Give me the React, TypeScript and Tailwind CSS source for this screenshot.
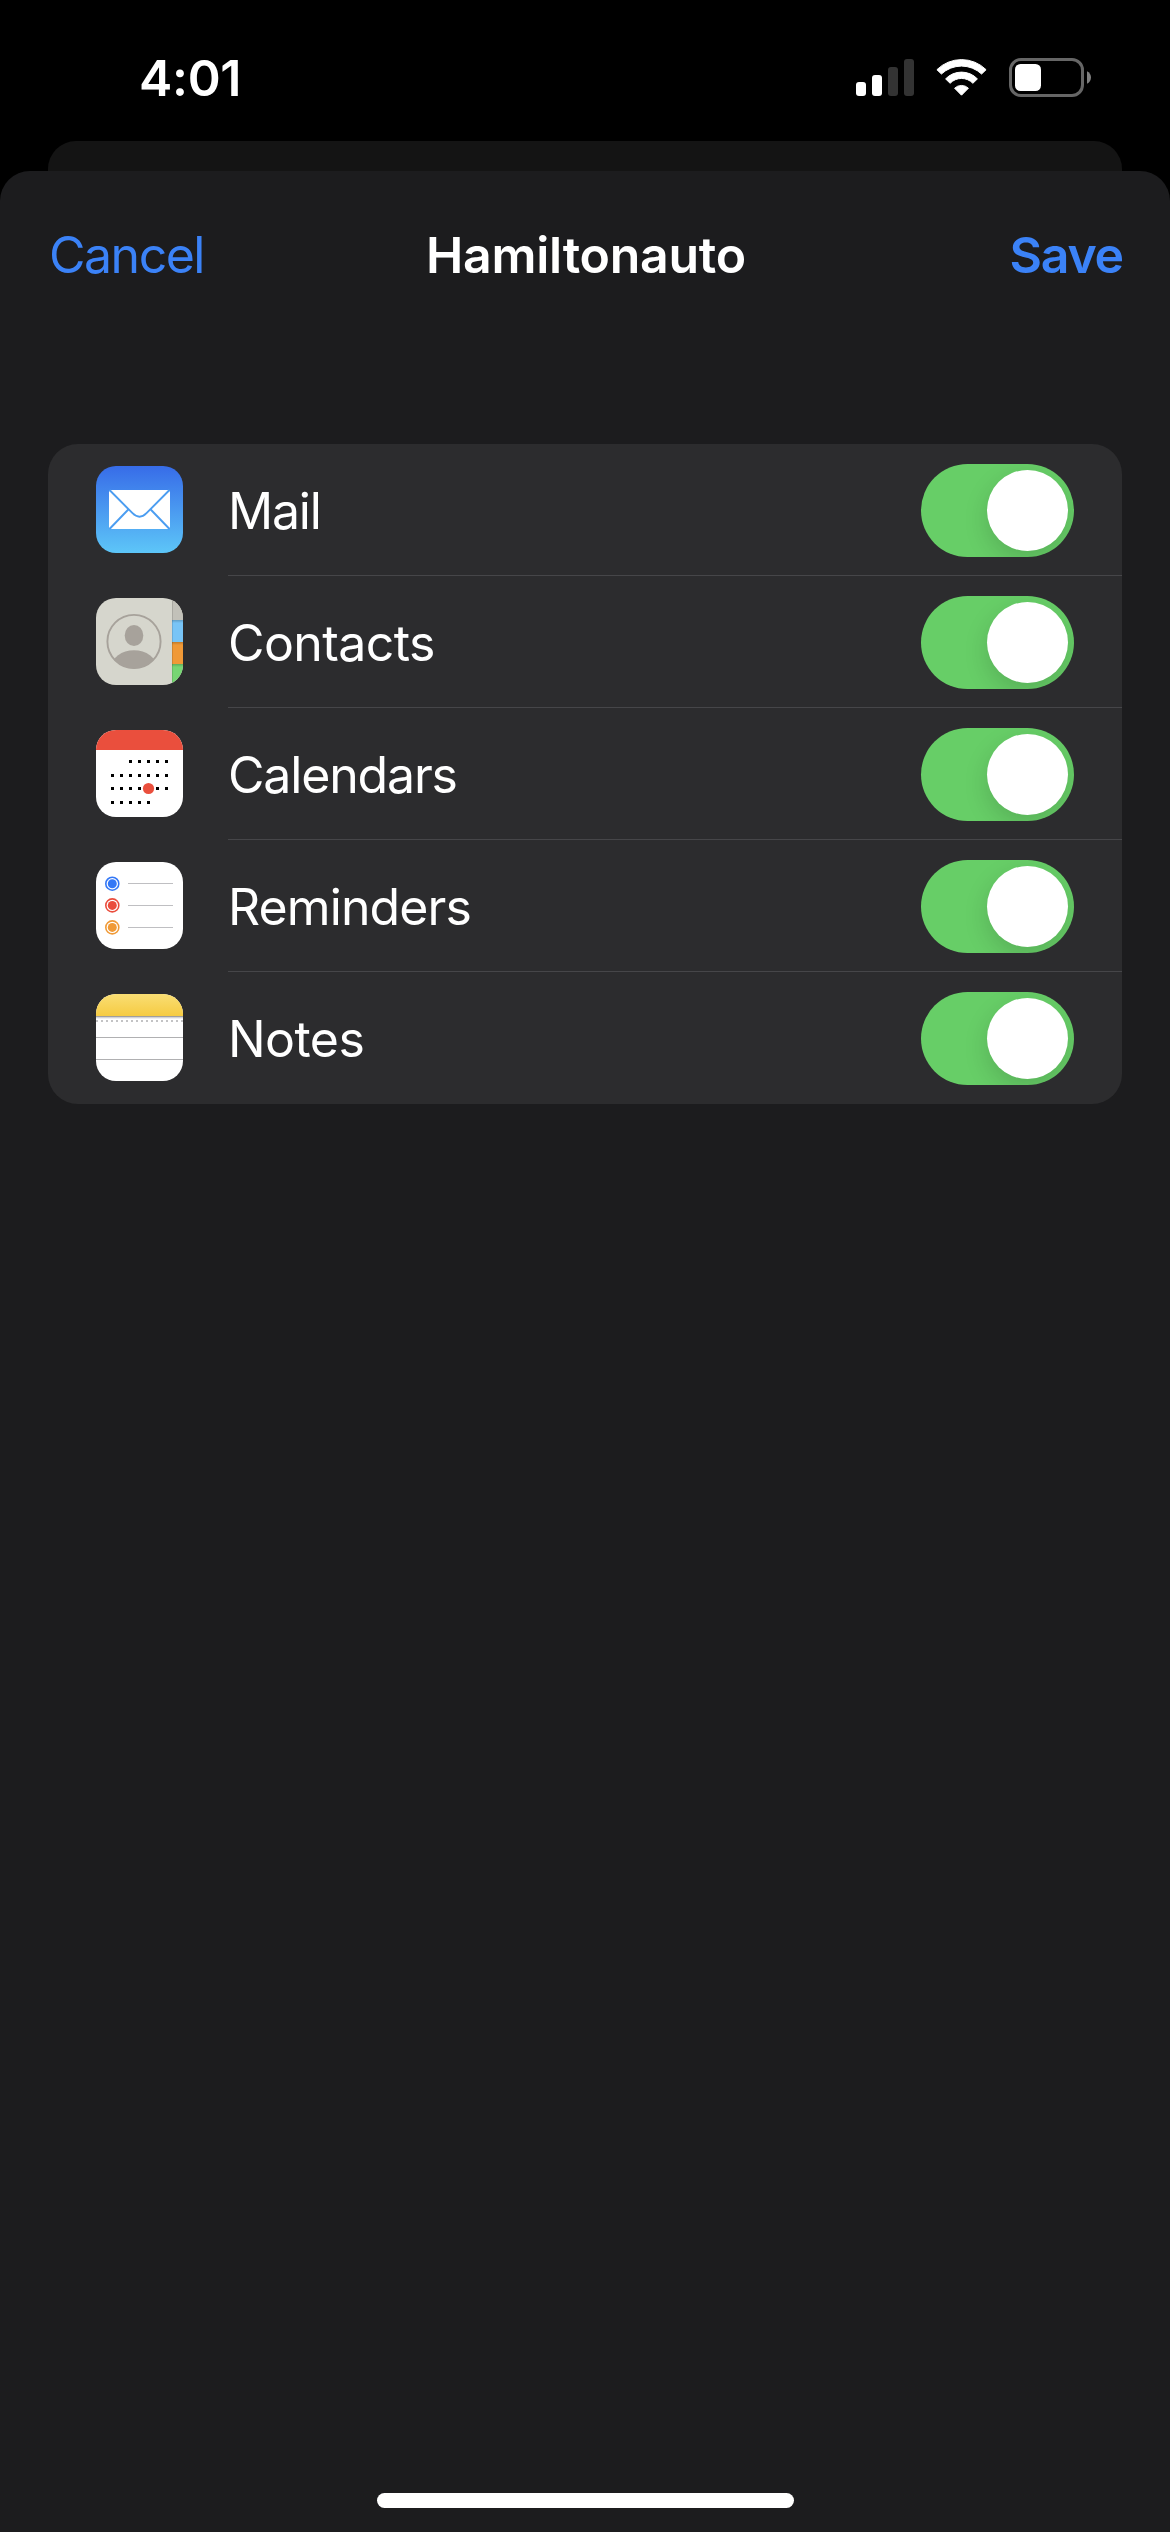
import { useState, type ReactNode } from 'react';
import clsx from 'clsx';

interface Service {
  id: string;
  label: string;
  tracking: string;
  icon: ReactNode;
}

function SignalIcon() {
  return (
    <svg width="58" height="39" viewBox="0 0 58 39" fill="#fff">
      <rect x="0" y="24" width="10" height="14" rx="3" />
      <rect x="16" y="17" width="10" height="21" rx="3" />
      <rect x="32" y="9" width="10" height="29" rx="3" fill="#333" />
      <rect x="48" y="1" width="10" height="37" rx="3" fill="#333" />
    </svg>
  );
}

function WifiIcon() {
  return (
    <svg width="51" height="39" viewBox="0 -1 51 39" fill="#fff" stroke="#fff" strokeWidth="1" strokeLinejoin="round">
      <path d="M0.9 10.7A35 35 0 0 1 50.1 10.7L45.6 15A29.5 29.5 0 0 0 5.4 15Z" />
      <path d="M9.6 19.9A22 22 0 0 1 41.4 19.9L36.9 24.3A15.8 15.8 0 0 0 14.1 24.3Z" />
      <path d="M18.6 29.2A10 10 0 0 1 32.4 29.2L25.5 36.2Z" />
    </svg>
  );
}

function BatteryIcon() {
  return (
    <svg width="82" height="39" viewBox="0 0 82 39">
      <rect x="1.5" y="1.5" width="72" height="36" rx="10.5" fill="none" stroke="#666" strokeWidth="3" />
      <rect x="6" y="6" width="26" height="27" rx="5.5" fill="#fff" />
      <path d="M78 13.2C80.4 14.2 82 16.7 82 19.5S80.4 24.8 78 25.8Z" fill="#808080" />
    </svg>
  );
}

function MailIcon() {
  return (
    <svg width="87" height="87" viewBox="0 0 87 87">
      <defs>
        <linearGradient id="mail-bg" x1="0" y1="0" x2="0" y2="1">
          <stop offset="0" stopColor="#376ce8" />
          <stop offset="1" stopColor="#5dc6f8" />
        </linearGradient>
      </defs>
      <rect width="87" height="87" rx="20" fill="url(#mail-bg)" />
      <rect x="13" y="24" width="61" height="39" rx="2.5" fill="#fff" />
      <g fill="none" stroke="#4b9df1" strokeWidth="1.9">
        <path d="M13.5 24L36.5 47.2Q43.5 54.3 50.5 47.2L73.5 24" />
        <path d="M13.5 63L32.3 43.5M73.5 63L54.7 43.5" />
      </g>
    </svg>
  );
}

function ContactsIcon() {
  return (
    <svg width="87" height="87" viewBox="0 0 87 87">
      <defs>
        <clipPath id="contacts-shape">
          <rect width="87" height="87" rx="20" />
        </clipPath>
        <clipPath id="contacts-avatar">
          <circle cx="38" cy="43.5" r="27" />
        </clipPath>
        <linearGradient id="contacts-tab" x1="0" y1="0" x2="0" y2="1">
          <stop offset="0" stopColor="#000" stopOpacity="0.2" />
          <stop offset="1" stopColor="#000" stopOpacity="0" />
        </linearGradient>
      </defs>
      <g clipPath="url(#contacts-shape)">
        <rect width="87" height="87" fill="#d6d6cd" />
        <rect x="76" y="0" width="11" height="22" fill="#c2c1b9" />
        <rect x="76" y="22" width="11" height="22" fill="#78c4f6" />
        <rect x="76" y="44" width="11" height="22" fill="#f09937" />
        <rect x="76" y="66" width="11" height="21" fill="#77d673" />
        <rect x="76" y="22" width="11" height="3" fill="url(#contacts-tab)" />
        <rect x="76" y="44" width="11" height="3" fill="url(#contacts-tab)" />
        <rect x="76" y="66" width="11" height="3" fill="url(#contacts-tab)" />
        <rect x="76" y="0" width="1" height="87" fill="#000" opacity="0.12" />
      </g>
      <circle cx="38" cy="43.5" r="26.6" fill="none" stroke="#a7a29b" strokeWidth="1.9" />
      <g clipPath="url(#contacts-avatar)" fill="#a7a29b">
        <ellipse cx="38" cy="37.5" rx="9.3" ry="10.5" />
        <ellipse cx="38" cy="69" rx="22.5" ry="16.7" />
      </g>
    </svg>
  );
}

// [row y, first column, last column]
const calendarRows = [
  [30, 2, 6],
  [44, 0, 6],
  [57, 0, 6],
  [71, 0, 4],
];

function CalendarIcon() {
  return (
    <svg width="87" height="87" viewBox="0 0 87 87">
      <defs>
        <clipPath id="calendar-shape">
          <rect width="87" height="87" rx="20" />
        </clipPath>
      </defs>
      <g clipPath="url(#calendar-shape)">
        <rect width="87" height="87" fill="#fff" />
        <rect width="87" height="20" fill="#ea4f3d" />
      </g>
      {calendarRows.map(([y, from, to]) =>
        Array.from({ length: to - from + 1 }, (_, i) => (
          <rect key={`${y}-${i}`} x={15 + (from + i) * 9} y={y} width="3" height="3" fill="#000" />
        ))
      )}
      <circle cx="52.5" cy="58.5" r="5.6" fill="#ea4f3d" />
    </svg>
  );
}

function RemindersIcon() {
  const rows = [
    { y: 21.7, line: 21, color: '#3478f6' },
    { y: 43.4, line: 43, color: '#ea4d3d' },
    { y: 65.4, line: 65, color: '#f09a37' },
  ];
  return (
    <svg width="87" height="87" viewBox="0 0 87 87">
      <rect width="87" height="87" rx="20" fill="#fff" />
      {rows.map((row) => (
        <g key={row.color}>
          <circle cx="16.3" cy={row.y} r="6.5" fill="none" stroke={row.color} strokeWidth="1.6" />
          <circle cx="16.3" cy={row.y} r="4.5" fill={row.color} />
          <rect x="32" y={row.line} width="45" height="1" fill="#bfbfc2" />
        </g>
      ))}
    </svg>
  );
}

function NotesIcon() {
  return (
    <svg width="87" height="87" viewBox="0 0 87 87">
      <defs>
        <clipPath id="notes-shape">
          <rect width="87" height="87" rx="20" />
        </clipPath>
        <linearGradient id="notes-top" x1="0" y1="0" x2="0" y2="1">
          <stop offset="0" stopColor="#f9de74" />
          <stop offset="1" stopColor="#f6cb42" />
        </linearGradient>
      </defs>
      <g clipPath="url(#notes-shape)">
        <rect width="87" height="87" fill="#fff" />
        <rect width="87" height="22" fill="url(#notes-top)" />
        <rect y="22" width="87" height="1" fill="#a09f9c" />
        <rect y="23" width="87" height="1" fill="#d3d3d6" />
        <rect y="24" width="87" height="1" fill="#eeeef0" />
        <path d="M0 27H87" stroke="#c3c3c5" strokeWidth="2" strokeDasharray="2 3" />
        <rect y="43" width="87" height="1" fill="#b0b0b2" />
        <rect y="65" width="87" height="1" fill="#b0b0b2" />
      </g>
    </svg>
  );
}

const services: Service[] = [
  { id: 'mail', label: 'Mail', tracking: 'tracking-[-1.2px]', icon: <MailIcon /> },
  { id: 'contacts', label: 'Contacts', tracking: 'tracking-[-0.6px]', icon: <ContactsIcon /> },
  { id: 'calendars', label: 'Calendars', tracking: 'tracking-[-1.17px]', icon: <CalendarIcon /> },
  { id: 'reminders', label: 'Reminders', tracking: 'tracking-[-0.9px]', icon: <RemindersIcon /> },
  { id: 'notes', label: 'Notes', tracking: 'tracking-[-0.55px]', icon: <NotesIcon /> },
];

interface ToggleProps {
  label: string;
  checked: boolean;
  onChange: () => void;
}

function Toggle({ label, checked, onChange }: ToggleProps) {
  return (
    <button
      type="button"
      role="switch"
      aria-checked={checked}
      aria-label={label}
      onClick={onChange}
      className={clsx(
        'flex h-[93px] w-[153px] overflow-hidden rounded-full p-1.5',
        checked ? 'justify-end bg-[#67ce67]' : 'justify-start bg-[#39393d]'
      )}
    >
      <span className="size-[81px] rounded-full bg-white shadow-[0_9px_24px_rgba(0,0,0,0.15)]" />
    </button>
  );
}

function StatusBar() {
  return (
    <div className="flex h-[141px] items-start justify-between pr-[79px] pl-[139px]">
      <span className="pt-12 text-[50px] leading-[60px] font-semibold tracking-[-0.3px] text-white">4:01</span>
      <div className="flex gap-[22px] pt-[58px]">
        <SignalIcon />
        <WifiIcon />
        <BatteryIcon />
      </div>
    </div>
  );
}

export default function App() {
  const [enabled, setEnabled] = useState<Record<string, boolean>>({
    mail: true,
    contacts: true,
    calendars: true,
    reminders: true,
    notes: true,
  });

  const toggle = (id: string) => setEnabled((prev) => ({ ...prev, [id]: !prev[id] }));

  return (
    <div className="flex h-[2532px] w-[1170px] flex-col overflow-hidden bg-black font-['Inter','Liberation_Sans',sans-serif]">
      <StatusBar />

      {/* edge of the sheet underneath */}
      <div className="mx-12 h-[30px] shrink-0 rounded-t-[28px] bg-[#141414]" />

      <div className="flex flex-1 flex-col rounded-t-[30px] bg-[#1c1c1e]">
        <header className="grid grid-cols-[1fr_auto_1fr] pt-[54px] pr-[47px] pl-[49px] text-[50px] leading-[60px]">
          <button type="button" className="justify-self-start tracking-[-1.5px] text-[#3b82f7]">
            Cancel
          </button>
          <h1 className="font-semibold tracking-[-0.27px] text-white">Hamiltonauto</h1>
          <button type="button" className="justify-self-end font-semibold tracking-[-1.2px] text-[#3b82f7]">
            Save
          </button>
        </header>

        <ul className="mx-12 mt-[159px] rounded-[30px] bg-[#2c2c2e]">
          {services.map((service, index) => (
            <li key={service.id} className="flex h-[132px] items-start pl-12">
              <div className="pt-[22px] pr-[45px]">{service.icon}</div>
              <div
                className={clsx(
                  'flex h-full flex-1 items-start justify-between pr-12',
                  index < services.length - 1 && 'border-b border-[#464649]'
                )}
              >
                <span className={clsx('pt-[37px] text-[50px] leading-[60px] text-white', service.tracking)}>
                  {service.label}
                </span>
                <div className="pt-5">
                  <Toggle
                    label={service.label}
                    checked={enabled[service.id]}
                    onChange={() => toggle(service.id)}
                  />
                </div>
              </div>
            </li>
          ))}
        </ul>

        <div className="mx-auto mt-auto mb-6 h-[15px] w-[417px] rounded-full bg-white" />
      </div>
    </div>
  );
}
